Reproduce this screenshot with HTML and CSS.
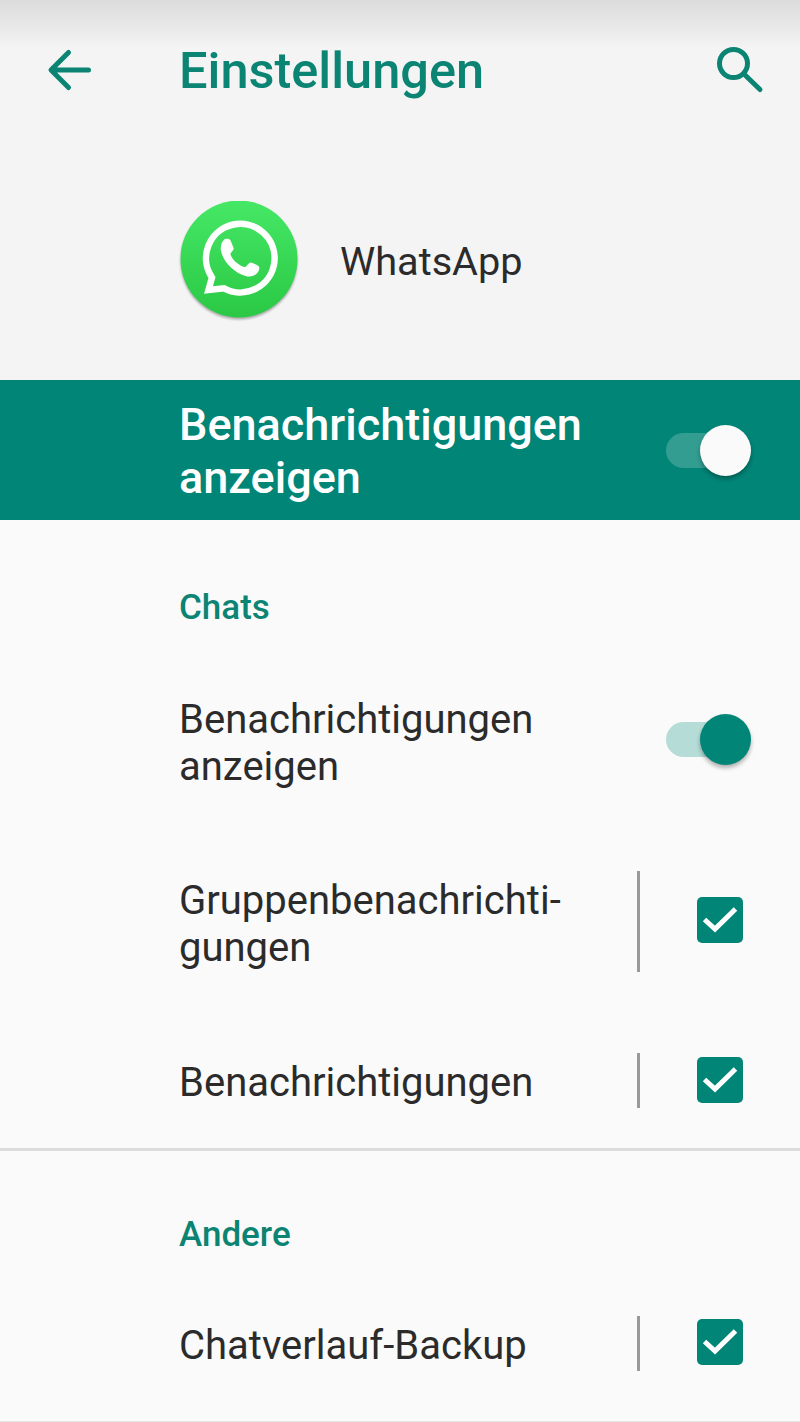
FILE: index.html
```html
<!DOCTYPE html>
<html lang="de">
<head>
    <meta charset="UTF-8">
    <meta name="viewport" content="width=device-width, initial-scale=1.0">
    <title>Einstellungen</title>
    <link rel="stylesheet" href="styles.css">
</head>
<body>
    <header class="header">
        <div class="toolbar">
            <svg class="back-icon" viewBox="0 0 48 44">
                <path d="M41.500 22H5M21.500 4.500L4 22l17.500 17.500"/>
            </svg>
            <h1>Einstellungen</h1>
            <svg class="search-icon" viewBox="0 0 48 48">
                <circle cx="16.500" cy="17.500" r="14"/>
                <path d="M28.500 29.500L43 43.500"/>
            </svg>
        </div>
        <div class="app">
            <svg class="app-icon" viewBox="0 0 118 118">
                <defs>
                    <linearGradient id="green" x1="0" y1="0" x2="0" y2="1">
                        <stop offset="0" stop-color="#45e865"/>
                        <stop offset="1" stop-color="#2ac845"/>
                    </linearGradient>
                </defs>
                <circle cx="59" cy="58" r="58.500" fill="url(#green)"/>
                <path d="M28.500 89L32 76.500A34.300 34.300 0 1 1 44 87.300Z" fill="none" stroke="#fff" stroke-width="6.500"/>
                <path transform="translate(2 1) scale(.95)" d="M44.500 39.500c1.200-1 5-1.300 6.200.4 1 1.400 3 6.700 3.600 8.600.7 2.200-3.600 5.200-3.300 6.800 1.600 5 8.300 11.500 14.500 13.200 2.200.5 4.700-5.200 7-4.800 1.800.4 6.300 2.600 8.200 3.800 1.500 1.200.3 5.200-1.400 7.300-2.300 2.700-6.800 4.300-10.500 3.500C55.500 75.500 43.500 63 41 51.500c-.8-4.500.5-9.500 3.500-12z" fill="#fff"/>
            </svg>
            <span class="app-name">WhatsApp</span>
        </div>
    </header>

    <div class="banner">
        <span class="text">Benachrichtigungen<br>anzeigen</span>
        <span class="switch"></span>
    </div>

    <section class="section">
        <h2>Chats</h2>
        <div class="row tall">
            <span class="text">Benachrichtigungen<br>anzeigen</span>
            <span class="switch"></span>
        </div>
        <div class="row group">
            <span class="text">Gruppenbenachrichti-<br>gungen</span>
            <span class="line"></span>
            <svg class="check" viewBox="0 0 46 46"><path d="M7.500 22.500L18 32 38.500 12"/></svg>
        </div>
        <div class="row">
            <span class="text">Benachrichtigungen</span>
            <span class="line"></span>
            <svg class="check" viewBox="0 0 46 46"><path d="M7.500 22.500L18 32 38.500 12"/></svg>
        </div>
    </section>

    <section class="section other">
        <h2>Andere</h2>
        <div class="row">
            <span class="text">Chatverlauf-Backup</span>
            <span class="line"></span>
            <svg class="check" viewBox="0 0 46 46"><path d="M7.500 22.500L18 32 38.500 12"/></svg>
        </div>
    </section>
</body>
</html>
```
FILE: styles.css
```css
* {
    box-sizing: border-box;
}
body {
    margin: 0;
    height: 1422px;
    overflow: hidden;
    background: #fafafa;
    border-bottom: 1px solid #e6e6e6;
    color: #2b2b2b;
    font-family: Roboto, sans-serif;
    font-size: 40px;
}
h1, h2 {
    margin: 0;
    color: #0b8473;
    font-weight: 500;
}
.header {
    height: 380px;
    background: linear-gradient(#dcdcdc, #e6e6e6 22px, #f4f4f4 48px);
}
.toolbar {
    display: flex;
    align-items: center;
    height: 140px;
    padding: 0 35px 0 47px;
}
.back-icon {
    width: 48px;
    height: 44px;
    margin-right: 84px;
}
.back-icon, .search-icon {
    fill: none;
    stroke: #0b8473;
    stroke-width: 5;
    stroke-linecap: round;
    stroke-linejoin: round;
}
.search-icon {
    width: 48px;
    height: 48px;
    margin-left: auto;
}
h1 {
    padding-top: 2px;
    font-size: 50.5px;
    line-height: 60px;
}
.app {
    display: flex;
    align-items: center;
    gap: 42px;
    height: 240px;
    padding-left: 180px;
}
.app-icon {
    width: 118px;
    height: 118px;
    filter: drop-shadow(0 2px 1px rgba(0, 0, 0, 0.3));
}
.app-name {
    padding-top: 2px;
    font-size: 39.7px;
}
.banner {
    display: flex;
    align-items: center;
    height: 140px;
    padding: 0 50px 0 179px;
    background: #008577;
    color: #fff;
    font-size: 45px;
    font-weight: 500;
    line-height: 53px;
}
.text {
    flex: 1;
    padding-top: 2px;
}
.section {
    padding-top: 40px;
}
.other {
    padding-top: 36px;
    border-top: 3px solid #dcdcdc;
}
h2 {
    height: 94px;
    padding-left: 179px;
    font-size: 35px;
    line-height: 96px;
}
.row {
    display: flex;
    align-items: center;
    height: 135px;
    padding: 0 57px 0 179px;
    line-height: 47px;
}
.row .text {
    padding-top: 4px;
}
.tall {
    height: 175px;
    padding-right: 50px;
}
.tall .text {
    padding-top: 2px;
}
.group {
    height: 184px;
}
.group .text {
    padding-top: 6px;
}
.other .row {
    height: 124px;
}
.switch {
    display: flex;
    align-items: center;
    justify-content: flex-end;
    width: 68px;
    height: 35px;
    margin-right: 16px;
    border-radius: 18px;
    background: #b5dcd7;
}
.switch::after {
    content: "";
    flex: none;
    width: 51px;
    height: 51px;
    margin-right: -17px;
    border-radius: 50%;
    background: #008577;
    box-shadow: 0 3px 4px rgba(0, 0, 0, 0.3);
}
.tall .switch {
    margin-bottom: 4px;
}
.banner .switch {
    background: #339d92;
}
.banner .switch::after {
    background: #fafafa;
}
.line {
    width: 3px;
    height: 55px;
    margin-right: 57px;
    background: #999;
}
.group .line {
    height: 101px;
}
.check {
    width: 46px;
    height: 46px;
    margin-bottom: 2px;
    border-radius: 5px;
    background: #008577;
    fill: none;
    stroke: #fff;
    stroke-width: 5;
}
```
